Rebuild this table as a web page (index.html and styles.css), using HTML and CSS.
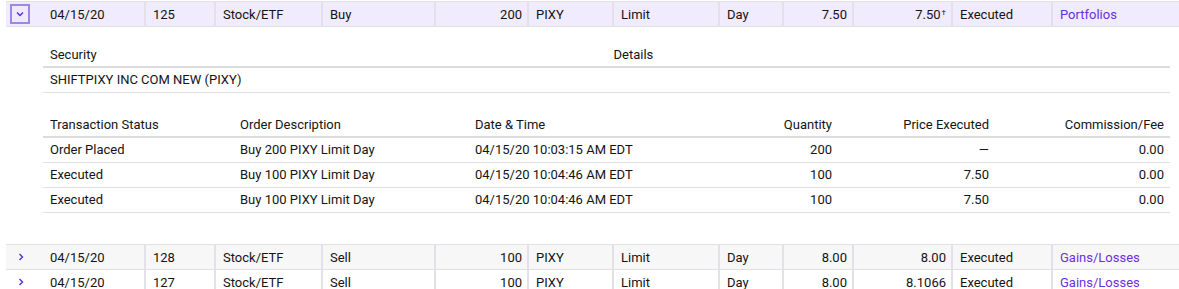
FILE: index.html
```html
<!DOCTYPE html>
<html>
<head>
<meta charset="utf-8">
<link rel="stylesheet" href="styles.css">
</head>
<body>
<div class="wrap">
<table class="orders">
  <colgroup>
    <col style="width:37px"><col style="width:102px"><col style="width:70px"><col style="width:107px"><col style="width:113px"><col style="width:93px"><col style="width:85px"><col style="width:106px"><col style="width:64px"><col style="width:70px"><col style="width:99px"><col style="width:100px"><col style="width:127px">
  </colgroup>
  <tbody>
    <tr class="row open">
      <td class="exp"><span class="btn"><svg width="8" height="6" viewBox="0 0 8 6"><path d="M1 1.5 L4 4.5 L7 1.5" fill="none" stroke="#5b2bd6" stroke-width="1.4"/></svg></span></td>
      <td>04/15/20</td>
      <td class="div">125</td>
      <td class="div">Stock/ETF</td>
      <td class="div">Buy</td>
      <td class="div num">200</td>
      <td class="div">PIXY</td>
      <td class="div">Limit</td>
      <td class="div">Day</td>
      <td class="div num">7.50</td>
      <td class="div num">7.50<sup class="dag">†</sup></td>
      <td class="div">Executed</td>
      <td class="div"><a class="lnk">Portfolios</a></td>
    </tr>
    <tr class="detail">
      <td colspan="13">
        <div class="inner">
          <table class="sub sec">
            <thead><tr><th>Security</th><th>Details</th></tr></thead>
            <tbody><tr><td>SHIFTPIXY INC COM NEW (PIXY)</td><td></td></tr></tbody>
          </table>
          <table class="sub tx">
            <colgroup><col style="width:190px"><col style="width:235px"><col style="width:232px"><col style="width:138px"><col style="width:157px"><col style="width:175px"></colgroup>
            <thead><tr><th>Transaction Status</th><th>Order Description</th><th>Date &amp; Time</th><th class="num">Quantity</th><th class="num">Price Executed</th><th class="num">Commission/Fee</th></tr></thead>
            <tbody>
              <tr><td>Order Placed</td><td>Buy 200 PIXY Limit Day</td><td>04/15/20 10:03:15 AM EDT</td><td class="num">200</td><td class="num">—</td><td class="num">0.00</td></tr>
              <tr><td>Executed</td><td>Buy 100 PIXY Limit Day</td><td>04/15/20 10:04:46 AM EDT</td><td class="num">100</td><td class="num">7.50</td><td class="num">0.00</td></tr>
              <tr><td>Executed</td><td>Buy 100 PIXY Limit Day</td><td>04/15/20 10:04:46 AM EDT</td><td class="num">100</td><td class="num">7.50</td><td class="num">0.00</td></tr>
            </tbody>
          </table>
        </div>
      </td>
    </tr>
    <tr class="row alt">
      <td class="exp"><span class="chev"><svg width="6" height="8" viewBox="0 0 6 8"><path d="M1.5 1 L4.5 4 L1.5 7" fill="none" stroke="#5b2bd6" stroke-width="1.4"/></svg></span></td>
      <td>04/15/20</td>
      <td class="div">128</td>
      <td class="div">Stock/ETF</td>
      <td class="div">Sell</td>
      <td class="div num">100</td>
      <td class="div">PIXY</td>
      <td class="div">Limit</td>
      <td class="div">Day</td>
      <td class="div num">8.00</td>
      <td class="div num">8.00</td>
      <td class="div">Executed</td>
      <td class="div"><a class="lnk">Gains/Losses</a></td>
    </tr>
    <tr class="row">
      <td class="exp"><span class="chev"><svg width="6" height="8" viewBox="0 0 6 8"><path d="M1.5 1 L4.5 4 L1.5 7" fill="none" stroke="#5b2bd6" stroke-width="1.4"/></svg></span></td>
      <td>04/15/20</td>
      <td class="div">127</td>
      <td class="div">Stock/ETF</td>
      <td class="div">Sell</td>
      <td class="div num">100</td>
      <td class="div">PIXY</td>
      <td class="div">Limit</td>
      <td class="div">Day</td>
      <td class="div num">8.00</td>
      <td class="div num">8.1066</td>
      <td class="div">Executed</td>
      <td class="div"><a class="lnk">Gains/Losses</a></td>
    </tr>
  </tbody>
</table>
</div>
</body>
</html>
```
FILE: styles.css
```css
html, body {
  margin: 0;
  padding: 0;
  background: #fff;
}
body {
  font-family: Roboto, "Liberation Sans", sans-serif;
  font-size: 13px;
  color: #141414;
}
.wrap {
  padding: 1px 0 0 6px;
}
.orders {
  width: 1173px;
  table-layout: fixed;
  border-collapse: collapse;
}
.orders > tbody > .row > td {
  padding: 4px 5px 3px 7px;
  line-height: 17px;
  border-top: 1px solid #e0e0e0;
  border-bottom: 1px solid #e0e0e0;
  white-space: nowrap;
  vertical-align: middle;
}
.orders > tbody > .row > td.div {
  border-left: 2px solid #e2e0e8;
}
.row.open > td { background: #f0ebfd; }
.row.alt > td { background: #f7f7f7; }
.num { text-align: right; }
.orders > tbody > .row > td.exp { padding: 0 0 0 4px; }
.btn {
  display: flex;
  align-items: center;
  justify-content: center;
  width: 16px;
  height: 16px;
  border: 2px solid #9e85e6;
  background: #efe9ff;
}
.chev {
  display: flex;
  padding-left: 8px;
}
.dag {
  font-size: 8px;
  vertical-align: 4px;
  line-height: 0;
  margin-left: 1px;
}
.lnk {
  color: #6b2fe0;
  text-decoration: none;
}
.detail > td {
  padding: 0;
}
.inner {
  padding: 13px 9px 31px 37px;
}
.sub {
  width: 1127px;
  table-layout: fixed;
  border-collapse: collapse;
}
.sub th {
  font-weight: normal;
  text-align: left;
  line-height: 17px;
  padding: 6px 6px 3px 7px;
  border-bottom: 2px solid #dcdcdc;
  vertical-align: middle;
}
.sub th.num { text-align: right; }
.sub td {
  line-height: 17px;
  padding: 3px 6px 4px 7px;
  border-bottom: 1px solid #e0e0e0;
  vertical-align: middle;
  white-space: nowrap;
}
.sec { margin-bottom: 17px; }
```
